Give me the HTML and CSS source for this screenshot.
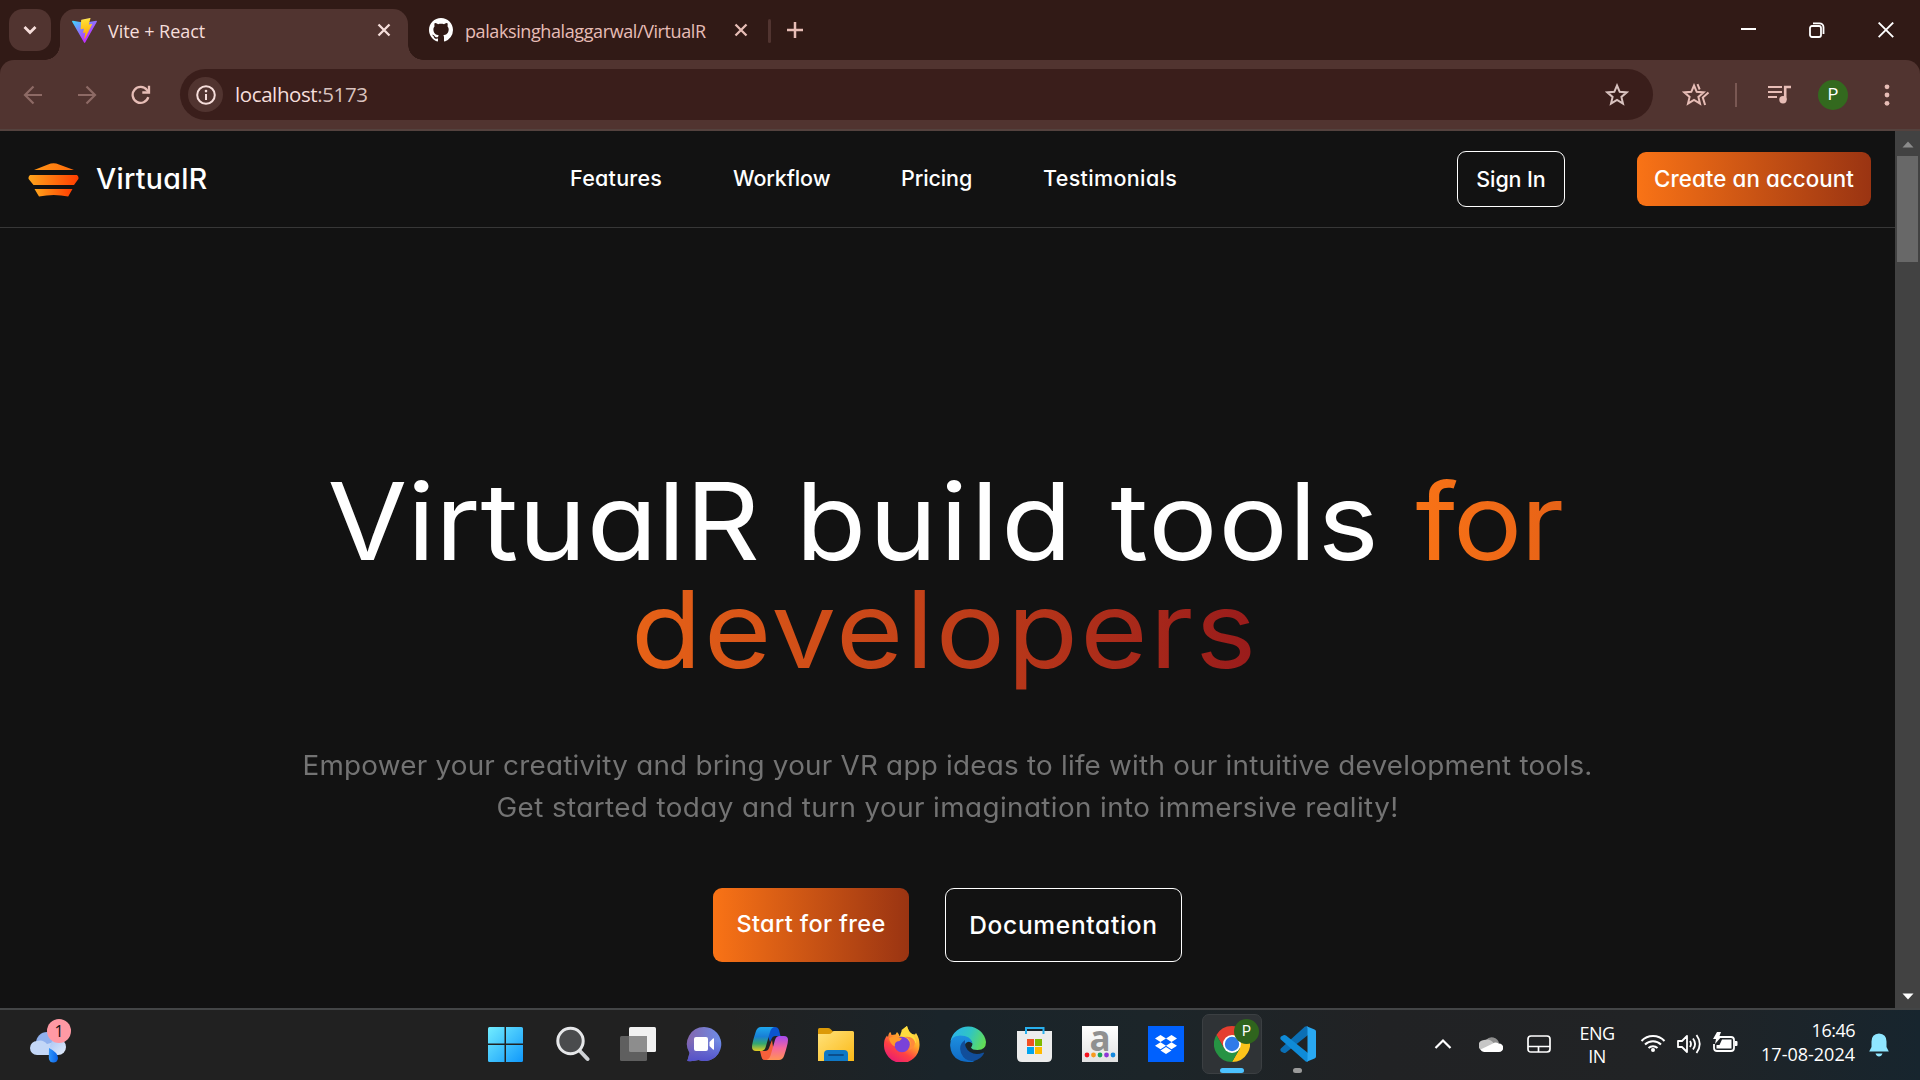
FILE: index.html
```html
<!DOCTYPE html>
<html lang="en">
<head>
<meta charset="utf-8">
<title>Vite + React</title>
<link rel="stylesheet" href="styles.css">
</head>
<body>
<div class="screen">

  <!-- Browser tab strip -->
  <header class="tabstrip">
    <button class="tab-search" aria-label="Search tabs"><svg width="14" height="10" viewBox="0 0 14 10"><path d="M1.5 2l5.500 5.500 5.500-5.500" fill="none" stroke="#f6dedb" stroke-width="2.800"/></svg></button>
    <div class="tab tab-active">
      <svg class="favicon" width="25" height="25" viewBox="0 0 256 257">
        <defs>
          <linearGradient id="va" x1="-.8%" x2="57.600%" y1="7.600%" y2="78.400%"><stop offset="0" stop-color="#41D1FF"/><stop offset="1" stop-color="#BD34FE"/></linearGradient>
          <linearGradient id="vb" x1="43.400%" x2="50.300%" y1="2.200%" y2="89%"><stop offset="0" stop-color="#FFEA83"/><stop offset=".083" stop-color="#FFDD35"/><stop offset="1" stop-color="#FFA800"/></linearGradient>
        </defs>
        <path fill="url(#va)" d="M255.153 37.938L134.897 252.976c-2.483 4.440-8.862 4.466-11.382.048L.875 37.958c-2.746-4.814 1.371-10.646 6.827-9.670l120.385 21.517a6.537 6.537 0 0 0 2.322-.004l117.867-21.483c5.438-.991 9.574 4.796 6.877 9.620Z"/>
        <path fill="url(#vb)" d="M185.432.063L96.440 17.501a3.268 3.268 0 0 0-2.634 3.014l-5.474 92.456a3.268 3.268 0 0 0 3.997 3.378l24.777-5.718c2.318-.535 4.413 1.507 3.936 3.838l-7.361 36.047c-.495 2.426 1.782 4.500 4.151 3.780l15.304-4.649c2.372-.72 4.652 1.360 4.150 3.788l-11.698 56.621c-.732 3.542 3.979 5.473 5.943 2.437l1.313-2.028l72.516-144.720c1.215-2.423-.88-5.186-3.540-4.672l-25.505 4.922c-2.396.462-4.435-1.770-3.759-4.114l16.646-57.705c.677-2.350-1.370-4.583-3.769-4.113Z"/>
      </svg>
      <span class="tab-title">Vite + React</span>
      <svg class="tab-close" width="14" height="14" viewBox="0 0 14 14"><path d="M1.500 1.500l11 11m0-11l-11 11" stroke="#f6dedb" stroke-width="2.300"/></svg>
    </div>
    <div class="tab tab-idle">
      <svg class="favicon" width="24" height="24" viewBox="0 0 16 16"><path fill="#fff" d="M8 0C3.580 0 0 3.580 0 8c0 3.540 2.290 6.530 5.470 7.590.4.070.550-.170.550-.380 0-.190-.010-.820-.010-1.490-2.010.370-2.530-.490-2.690-.940-.090-.230-.480-.940-.820-1.130-.280-.150-.680-.520-.010-.530.630-.010 1.080.580 1.230.820.720 1.210 1.870.870 2.330.660.070-.520.280-.870.510-1.070-1.780-.2-3.640-.890-3.640-3.950 0-.870.310-1.590.820-2.150-.080-.2-.360-1.020.080-2.120 0 0 .670-.210 2.200.820.640-.180 1.320-.270 2-.270s1.360.090 2 .270c1.530-1.040 2.200-.820 2.200-.820.440 1.100.160 1.920.080 2.120.510.560.820 1.270.820 2.150 0 3.070-1.870 3.750-3.650 3.950.290.250.540.730.540 1.480 0 1.070-.010 1.930-.010 2.200 0 .210.150.460.550.380A8.010 8.010 0 0 0 16 8c0-4.420-3.580-8-8-8z"/></svg>
      <span class="tab-title">palaksinghalaggarwal/VirtualR</span>
      <svg class="tab-close" width="14" height="14" viewBox="0 0 14 14"><path d="M1.500 1.500l11 11m0-11l-11 11" stroke="#e7bdb6" stroke-width="2.300"/></svg>
    </div>
    <i class="tab-divider"></i>
    <svg class="tab-new" width="16" height="16" viewBox="0 0 16 16"><path d="M8 0v16M0 8h16" stroke="#e7bdb6" stroke-width="2.500"/></svg>
    <div class="window-controls">
      <svg width="16" height="16" viewBox="0 0 16 16"><path d="M1 7h15" stroke="#fff" stroke-width="2"/></svg>
      <svg width="16" height="16" viewBox="0 0 16 16" fill="none" stroke="#fff" stroke-width="1.800"><rect x="1" y="4" width="11" height="11" rx="2"/><path d="M4 1.300h6.500a4 4 0 0 1 4 4V12"/></svg>
      <svg width="16" height="16" viewBox="0 0 16 16"><path d="M.6.600l14.600 14.600m0-14.600L.6 15.200" stroke="#fff" stroke-width="1.900"/></svg>
    </div>
  </header>

  <!-- Browser toolbar -->
  <div class="toolbar">
    <svg class="tool-back" width="20" height="20" viewBox="0 0 20 20" fill="none" stroke="#8d6a65" stroke-width="2.200"><path d="M19 10H2m8.500-8.500L2 10l8.500 8.500"/></svg>
    <svg class="tool-forward" width="20" height="20" viewBox="0 0 20 20" fill="none" stroke="#8d6a65" stroke-width="2.200"><path d="M1 10h17M9.500 1.500L18 10l-8.500 8.500"/></svg>
    <svg class="tool-reload" width="20" height="20" viewBox="0 0 20 20" fill="none" stroke="#e7bdb6" stroke-width="2.300"><path d="M17.300 12.200A8 8 0 1 1 16 5l1.800 2"/><path d="M18 .8v6.700h-6.700"/></svg>
    <div class="omnibox">
      <span class="site-info"><svg width="20" height="20" viewBox="0 0 20 20"><circle cx="10" cy="10" r="8.800" fill="none" stroke="#f6dedb" stroke-width="2"/><path d="M10 9v6" stroke="#f6dedb" stroke-width="2"/><circle cx="10" cy="6.100" r="1.300" fill="#f6dedb"/></svg></span>
      <span class="url">localhost<span class="port">:5173</span></span>
      <svg class="bookmark" width="24" height="24" viewBox="0 0 24 24"><path d="M12 2.500l2.700 6.300 6.900.6-5.200 4.500 1.600 6.700-6-3.600-6 3.600 1.600-6.700-5.200-4.500 6.900-.6z" fill="none" stroke="#d8c2bf" stroke-width="2"/></svg>
    </div>
    <svg class="tool-star" width="28" height="24" viewBox="0 0 28 24" fill="none" stroke="#e7bdb6" stroke-width="2"><path d="M12 2.500l2.700 6.300 6.900.6-5.200 4.500 1.600 6.700-6-3.600-6 3.600 1.600-6.700-5.200-4.500 6.900-.6z"/><path d="M15.500 1.200l2.200 5.300M26.500 9.600l-5.700 5 2.300 7.400"/></svg>
    <i class="tool-divider"></i>
    <svg class="tool-media" width="24" height="20" viewBox="0 0 24 20"><path d="M0 2h14M0 7h14M0 12h9" stroke="#e7bdb6" stroke-width="2.200"/><path d="M17.200 15V2H23" fill="none" stroke="#e7bdb6" stroke-width="2.600"/><circle cx="15" cy="14.700" r="3.700" fill="#e7bdb6"/></svg>
    <span class="avatar">P</span>
    <svg class="tool-menu" width="6" height="22" viewBox="0 0 6 22" fill="#e7bdb6"><circle cx="3" cy="2.800" r="2.400"/><circle cx="3" cy="11" r="2.400"/><circle cx="3" cy="19.300" r="2.400"/></svg>
  </div>

  <!-- Page -->
  <div class="viewport">
    <main class="page">
      <nav class="navbar">
        <svg class="logo" width="51" height="34" viewBox="0 0 51 34">
          <defs><linearGradient id="lg" x1="0" x2="1"><stop offset="0" stop-color="#ffa51c"/><stop offset="1" stop-color="#ff3d00"/></linearGradient>
          <linearGradient id="lt" x1="0" x2="1"><stop offset="0" stop-color="#ff9417"/><stop offset="1" stop-color="#ff6a0a"/></linearGradient></defs>
          <path d="M6 7L20 1.600Q25.500-1 31 1.600L46 7z" fill="url(#lt)"/>
          <path d="M2 12h47q2.500 2.500 1 4.500L46 22H5.500L1 16.500Q-.5 14.500 2 12z" fill="url(#lg)"/>
          <path d="M6.500 26h38l-4.300 7.500Q26 30.500 11 33.500z" fill="url(#lg)"/>
        </svg>
        <span class="brand">VirtualR</span>
        <ul class="links">
          <li class="w-features">Features</li>
          <li class="w-workflow">Workflow</li>
          <li class="w-pricing">Pricing</li>
          <li class="w-testimonials">Testimonials</li>
        </ul>
        <a class="btn btn-signin">Sign In</a>
        <a class="btn btn-create">Create an account</a>
      </nav>
      <section class="hero">
        <h1><span class="t-name">VirtualR</span> <span class="t-build">build</span> <span class="t-tools">tools</span> <span class="accent"><span class="t-for">for</span><br><span class="t-dev">developers</span></span></h1>
        <p class="lead"><span class="lead-one">Empower your creativity and bring your VR app ideas to life with our intuitive development tools.</span><br><span class="lead-two">Get started today and turn your imagination into immersive reality!</span></p>
        <div class="actions">
          <a class="btn btn-start">Start for free</a>
          <a class="btn btn-docs">Documentation</a>
        </div>
      </section>
    </main>
    <aside class="scrollbar">
      <svg width="12" height="7" viewBox="0 0 12 7"><path d="M.5 6.500L6 .5l5.500 6z" fill="#8b8b8b"/></svg>
      <i class="thumb"></i>
      <svg class="down" width="12" height="7" viewBox="0 0 12 7"><path d="M.5.500L6 6.500l5.500-6z" fill="#fff"/></svg>
    </aside>
  </div>

  <!-- Windows taskbar -->
  <footer class="taskbar">
    <div class="weather">
      <svg width="38" height="34" viewBox="0 0 38 34">
        <defs><linearGradient id="wc" x1="0" y1="0" x2="1" y2="1"><stop offset="0" stop-color="#a9c4f4"/><stop offset="1" stop-color="#e4edfb"/></linearGradient><linearGradient id="wd" x1="0" x2="1"><stop offset="0" stop-color="#2f95fb"/><stop offset="1" stop-color="#0a62e8"/></linearGradient></defs>
        <circle cx="18" cy="14" r="11" fill="#90b1ee"/><path d="M8 26a7 7 0 0 1 0-14q6-2 10 3l11-3v14z" fill="#c3d7f7"/><circle cx="29" cy="18" r="8" fill="url(#wc)"/>
        <path d="M20 19q9 4.500 9 10a4.600 4.600 0 0 1-9.200 0z" fill="url(#wd)"/>
      </svg>
      <span class="badge">1</span>
    </div>

    <div class="apps">
      <span class="app"><svg width="36" height="36" viewBox="0 0 36 36"><defs><linearGradient id="w" x1="0" y1="0" x2="1" y2="1"><stop offset="0" stop-color="#72edff"/><stop offset="1" stop-color="#1098fb"/></linearGradient><mask id="wm"><path fill="#fff" d="M0 1h16.500v16.500H0zM18 1h17v16.500H18zM0 19h16.500v17H0zM18 19h17v17H18z"/></mask></defs><rect y="1" width="35" height="35" rx="1.500" fill="url(#w)" mask="url(#wm)"/></svg></span>
      <span class="app"><svg width="36" height="36" viewBox="0 0 36 36"><path d="M25 24l8.500 9" stroke="#cfd2d6" stroke-width="4" stroke-linecap="round"/><circle cx="16.500" cy="15" r="12.700" fill="#4a4b4d" stroke="#e6e7e9" stroke-width="3"/></svg></span>
      <span class="app"><svg width="36" height="36" viewBox="0 0 36 36"><rect x="9" y="1" width="27" height="25" rx="1.500" fill="#f1f1f1"/><rect y="10" width="27" height="25" rx="1.500" fill="#5f5f5f"/><path d="M9 10h18v16H10.500Q9 26 9 24.500z" fill="#8d8d8d"/></svg></span>
      <span class="app"><svg width="36" height="36" viewBox="0 0 36 36"><defs><linearGradient id="ch" x1="0" y1="0" x2="1" y2="0"><stop offset="0" stop-color="#8466ad"/><stop offset="1" stop-color="#6d8de8"/></linearGradient><linearGradient id="ch2" x1="0" y1="0" x2="0" y2="1"><stop offset=".4" stop-color="#5558d0" stop-opacity="0"/><stop offset="1" stop-color="#5351ca"/></linearGradient></defs><path d="M18 1a17 17 0 1 1-5.500 33Q7 35.500 1.300 35L3.500 27A17 17 0 0 1 18 1z" fill="url(#ch)"/><path d="M18 1a17 17 0 1 1-5.500 33Q7 35.500 1.300 35L3.500 27A17 17 0 0 1 18 1z" fill="url(#ch2)"/><rect x="8" y="11" width="14" height="14" rx="2" fill="#fff"/><path d="M23.500 16l3.500-3.600q1-.6 1 .6v10q0 1.200-1 .6L23.500 20z" fill="#fff"/></svg></span>
      <span class="app"><svg width="36" height="36" viewBox="0 0 36 36"><defs><linearGradient id="co1" x1="0" y1="0" x2="0" y2="1"><stop offset="0" stop-color="#1ea7ee"/><stop offset=".4" stop-color="#187fd5"/><stop offset=".7" stop-color="#35a86e"/><stop offset="1" stop-color="#e4cc20"/></linearGradient><linearGradient id="co2" x1="0" y1="0" x2="0" y2="1"><stop offset="0" stop-color="#a54af0"/><stop offset=".5" stop-color="#f5679d"/><stop offset="1" stop-color="#ff9355"/></linearGradient></defs>
        <path d="M13 1h10q3 0 4 3l1.500 6h-5q-3 0-4 3L18 16z" fill="#0a54d0"/><path d="M23 34H13q-3 0-3.500-3L8 25h5q3 0 4-3l3-8z" fill="#f5603a"/>
        <path d="M9 1h13q-3 1-4 5l-4 14q-1.200 5-5 5H4q-4 0-4-4Q0 17 4 5 5.500 1 9 1z" fill="url(#co1)"/><path d="M27.500 10H32q4 0 4 4 0 4-4 16-1.500 4-5 4H14.500q3-1 4.200-5L23 14q1.200-4 4.500-4z" fill="url(#co2)"/></svg></span>
      <span class="app"><svg width="36" height="36" viewBox="0 0 36 36"><defs><linearGradient id="ex" x1="0" y1="0" x2="1" y2="1"><stop offset="0" stop-color="#ffe27b"/><stop offset="1" stop-color="#fbb917"/></linearGradient></defs><path d="M0 10V3.500Q0 2 1.500 2H10q1.500 0 2.500 1l3 3v4z" fill="#dc9a08"/><path d="M0 8h11q1.500 0 3-1.500L15.500 5H34.500Q36 5 36 6.500V35H0z" fill="url(#ex)"/><path d="M6 35v-7q0-4 4-4h16q4 0 4 4v7z" fill="#0f78c6"/><path d="M11 29h14" stroke="#0b4e8c" stroke-width="1.800" stroke-linecap="round"/></svg></span>
      <span class="app"><svg width="36" height="36" viewBox="0 0 36 36"><defs><linearGradient id="f1" x1=".8" y1="0" x2=".2" y2="1"><stop offset="0" stop-color="#fff14d"/><stop offset=".35" stop-color="#ffab2b"/><stop offset=".65" stop-color="#ff4242"/><stop offset="1" stop-color="#e5167b"/></linearGradient></defs><path d="M6 6q1 0 1.500 3l4-.5L13 6q2 2 2.500 4h3L17.500 4 23 0q1 5 5 8l3 .5L32 7q4 6 3.500 13A17.700 17.700 0 0 1 0 18.500Q0 13 3 9.500 4 11 4 11 4 8 6 6z" fill="url(#f1)"/><path d="M16 10q1-6 7-10 1 5 5 8 4 4 4 9z" fill="#ffdd3e"/><circle cx="18" cy="18.500" r="7.800" fill="#7a42d8"/><path d="M5 12q5-3 9-1l4 1.500q-2 3-5 3-3 2-2 5-5-2-6-8.500z" fill="#ff9a2b"/><path d="M20 11q5 1 6.500 5 1 5-2 8 6-1 6.500-8Q29 10 20 11z" fill="#ff8a3c"/></svg></span>
      <span class="app"><svg width="36" height="36" viewBox="0 0 36 36"><defs><linearGradient id="e1" x1="0" x2="1" y1=".3" y2=".6"><stop offset="0" stop-color="#2bb3ec"/><stop offset=".5" stop-color="#30c5c3"/><stop offset="1" stop-color="#63dd54"/></linearGradient><linearGradient id="e2" x1="0" x2="0" y1="0" y2="1"><stop offset="0" stop-color="#1d90e0"/><stop offset="1" stop-color="#0f69c4"/></linearGradient></defs><path d="M.5 15A18 18 0 0 1 36 16q0 8-8.500 8Q22 24 21 21.500q2.500-3 .5-6Q17 9 .5 15z" fill="url(#e1)"/><path d="M.2 20Q-.5 10 10 9.500q11 0 12.500 8-4-3.500-7 0-6 12 9 18.500Q21 36 18 36 1.500 35 .2 20z" fill="url(#e2)"/><path d="M15 14q-7 5-4 13 4 9 13 8 7-2 10-7.500 0-1.200-1.200-.8Q26 29.500 20 26q-6-4-5-12z" fill="#114e9a"/></svg></span>
      <span class="app"><svg width="36" height="36" viewBox="0 0 36 36"><path d="M1 5h35v26q0 5-5 5H6q-5 0-5-5z" fill="#ececec"/><path d="M10 8V2h17.500v6" fill="none" stroke="#28b0ee" stroke-width="2"/><path fill="#f25022" d="M11 13h7v7h-7z"/><path fill="#7fba00" d="M19 13h7v7h-7z"/><path fill="#00a4ef" d="M11 21h7v7h-7z"/><path fill="#ffb900" d="M19 21h7v7h-7z"/></svg></span>
      <span class="app"><span class="alexa"><b>a</b><svg width="32" height="6" viewBox="0 0 32 6"><circle cx="3" cy="3" r="2.400" fill="#f5121d"/><circle cx="9.500" cy="3" r="2.400" fill="#f79a1e"/><circle cx="16" cy="3" r="2.400" fill="#19a45b"/><circle cx="22.500" cy="3" r="2.400" fill="#8d35d6"/><circle cx="29" cy="3" r="2.400" fill="#1489df"/></svg></span></span>
      <span class="app"><svg width="36" height="36" viewBox="0 0 36 36"><path fill="#0061fe" d="M0 0h36v36H0z"/><path fill="#fff" d="M12.500 9l5.500 3.500-5.500 3.500L7 12.500zM23.500 9l5.500 3.500-5.500 3.500-5.500-3.500zM12.500 16.200l5.500 3.500-5.500 3.500L7 19.700zM23.500 16.200l5.500 3.500-5.500 3.500-5.500-3.500zM18 21l5.500 3.500L18 28l-5.500-3.500z"/></svg></span>
      <span class="app app-current"><svg width="36" height="36" viewBox="0 0 48 48"><path d="M3.215 12A24 24 0 0 1 44.785 12H24L13.600 30z" fill="#e43e2f"/><path d="M44.785 12A24 24 0 0 1 24 48L34.400 30 24 12z" fill="#fcc31a"/><path d="M24 48A24 24 0 0 1 3.215 12L13.600 30H34.400z" fill="#269343"/><circle cx="24" cy="24" r="12" fill="#fff"/><circle cx="24" cy="24" r="9.600" fill="#2f7be9"/></svg><span class="profile">P</span></span>
      <span class="app app-open"><svg width="36" height="36" viewBox="0 0 36 36"><path d="M1 25.500l3 1.500q1 .2 2-.6L28 9V.5L25 .4.8 22.500q-1 1.500.2 3z" fill="#0b6fb5"/><path d="M1 10.500l3-1.500q1-.2 2 .6L28 27v8.500l-2 .2L.8 13.500q-1-1.500.2-3z" fill="#0f8bd8"/><path d="M26 0l8.500 3.500Q36 4.200 36 5.500v25q0 1.300-1.500 2L26 36q1.500-.5 1.500-2.500v-31Q27.500.5 26 0z" fill="#29a8f2"/></svg></span>
    </div>

    <div class="tray">
      <svg class="tray-chevron" width="18" height="12" viewBox="0 0 18 12"><path d="M1.500 10L9 2.500l7.500 7.500" fill="none" stroke="#fff" stroke-width="2.200"/></svg>
      <svg class="tray-cloud" width="24" height="18" viewBox="0 0 24 18"><path d="M7 5a7.500 7.500 0 0 1 13 3l-8 4z" fill="#8e8e8e"/><path d="M5 16a5.500 5.500 0 0 1 0-11q6-2 10 3.500l5 7.500z" fill="#c6c6c6"/><path d="M1.500 14.500L14 8.500q2-2 6 0a4.200 4.200 0 0 1 0 8.500H5q-2.500-.5-3.500-2.500z" fill="#fff"/></svg>
      <svg class="tray-pad" width="24" height="20" viewBox="0 0 24 20"><path d="M4 2h16q3 0 3 3v10q0 3-3 3H4q-3 0-3-3V5q0-3 3-3zM1 12.500h22M11.500 12.500V18" fill="none" stroke="#fff" stroke-width="1.700"/></svg>
      <span class="lang">ENG<br>IN</span>
      <svg class="tray-wifi" width="26" height="20" viewBox="0 0 26 20" fill="none" stroke="#fff" stroke-width="2"><path d="M1.500 8a16 16 0 0 1 23 0M5 11.500a11.200 11.200 0 0 1 16 0M8.500 15a6.400 6.400 0 0 1 9 0"/><circle cx="13" cy="17" r="2" fill="#fff" stroke="none"/></svg>
      <svg class="tray-sound" width="26" height="22" viewBox="0 0 26 22" fill="none" stroke="#fff" stroke-width="1.800"><path d="M2 8h4l5-5v16l-5-5H2zM14 8q2 3 0 6M17 5.500q4.200 5.500 0 11M20.500 2q6.500 9 0 18" stroke-linejoin="round"/></svg>
      <svg class="tray-battery" width="26" height="22" viewBox="0 0 26 22"><path d="M8 5h11q3 0 3 3v8q0 3-3 3H5q-3 0-3-3v-4" fill="none" stroke="#fff" stroke-width="1.800"/><path d="M10 7.500h9.500v9H4.500V13h3z" fill="#fff"/><path d="M23 9h1.500q1 0 1 1v3q0 1-1 1H23zM5 0h4L7.500 4H10L3 12l1-5H1z" fill="#fff"/></svg>
      <span class="clock"><span class="time">16:46</span><br>17-08-2024</span>
      <svg class="tray-bell" width="20" height="24" viewBox="0 0 20 24" fill="#8fe6ff"><path d="M10 .5q7.500.5 7.500 8V14l2.300 4.500H.2L2.500 14V8.500Q2.500 1 10 .5zM6.500 20.500h7q-1 3-3.500 3t-3.500-3z"/></svg>
    </div>
  </footer>
</div>
</body>
</html>
```
FILE: styles.css
```css
* { box-sizing: border-box; }
body { margin: 0; background: #121212; }
svg { display: block; flex: none; }
.screen {
  display: flex; flex-direction: column; width: 1920px; height: 1080px; overflow: hidden;
  font-family: "Open Sans", "Noto Sans", sans-serif; font-size: 18px; color: #fff;
}

/* tab strip */
.tabstrip { display: flex; height: 60px; flex: none; background: #311a16; }
.tab-search {
  display: flex; align-items: center; justify-content: center; width: 42px; height: 42px;
  margin: 9px 9px 0 9px; padding: 0; border: 0; border-radius: 14px; background: #513430;
}
.tab { display: flex; align-items: center; height: 51px; margin-top: 9px; padding-bottom: 9px; position: relative; }
.tab-active { width: 348px; padding-left: 12px; border-radius: 15px 15px 0 0; background: #513430; }
.tab-active::before, .tab-active::after {
  content: ""; position: absolute; bottom: 0; width: 15px; height: 15px;
}
.tab-active::before { left: -15px; background: radial-gradient(circle at 0 0, transparent 14.5px, #513430 15px); }
.tab-active::after { right: -15px; background: radial-gradient(circle at 100% 0, transparent 14.5px, #513430 15px); }
.tab-idle { width: 360px; padding-left: 21px; color: #e7bdb6; }
.tab-title { height: 24px; line-height: 24px; margin-top: 2px; white-space: nowrap; }
.tab-active .tab-title { width: 269px; margin-left: 11px; letter-spacing: -.05px; color: #f6dedb; }
.tab-idle .tab-title { width: 269px; margin-left: 12px; letter-spacing: -.4px; }
.tab-divider { width: 3px; height: 24px; margin: 19px 0 0 0; border-radius: 2px; background: #513430; }
.tab-new { margin: 22px 0 0 16px; }
.window-controls { display: flex; gap: 53px; margin: 22px 26px 0 auto; }

/* toolbar */
.toolbar {
  display: flex; align-items: center; height: 71px; flex: none;
  background: #513430; border-bottom: 2px solid #54423e; border-radius: 14px 14px 0 0;
  box-shadow: 0 -14px 0 0 #311a16;
  clip-path: inset(0);
}
.tool-back { margin-left: 23px; }
.tool-forward { margin-left: 34px; }
.tool-reload { margin-left: 34px; }
.omnibox {
  display: flex; align-items: center; width: 1473px; height: 51px; margin-left: 29px; padding: 0 24px 0 8px;
  border-radius: 26px; background: #3a1e1b;
}
.site-info {
  display: flex; align-items: center; justify-content: center; width: 35px; height: 35px;
  border-radius: 50%; background: #513430;
}
.url { margin: -1px 0 0 12px; font-size: 20.500px; letter-spacing: -.4px; color: #f6dedb; }
.port { color: #d8c2bf; }
.bookmark { margin-left: auto; }
.tool-star { margin-left: 29px; }
.tool-divider { width: 2px; height: 24px; margin-left: 25px; background: #7a5853; }
.tool-media { margin-left: 31px; }
.avatar {
  width: 30px; height: 30px; margin-left: 26px; border-radius: 50%; background: #33691e;
  font: 16.500px/30px Roboto, sans-serif; text-align: center;
}
.tool-menu { margin-left: 36px; }

/* page */
.viewport { display: flex; height: 877px; flex: none; }
.page { width: 1895px; background: #121212; font-family: Inter, sans-serif; font-feature-settings: "cv11"; }
.navbar {
  display: flex; align-items: center; height: 97px; padding-left: 28px;
  border-bottom: 1px solid #373737; font-size: 21.500px; font-weight: 450;
}
.brand { width: 474px; margin-left: 17px; padding-bottom: 2px; font-size: 28.500px; letter-spacing: .3px; }
.logo { margin-top: 2px; }
.links { display: flex; gap: 72px; width: 887px; margin: 0; padding: 0 0 2px; list-style: none; white-space: nowrap; }
.w-features { width: 91px; letter-spacing: .25px; }
.w-workflow { width: 96px; letter-spacing: -.1px; }
.w-pricing { width: 70px; letter-spacing: -.1px; }
.w-testimonials { letter-spacing: .35px; }
.btn {
  display: flex; align-items: center; justify-content: center; border-radius: 9px; white-space: nowrap;
}
.btn-signin { width: 108px; height: 56px; padding-bottom: 1px; border: 1px solid #fff; letter-spacing: -.1px; }
.btn-create {
  width: 234px; height: 54px; margin-left: 72px; padding-bottom: 1px; font-size: 22.300px; letter-spacing: .1px;
  background: linear-gradient(to right, #f97316, #9a3412);
}

/* the headline and lead are set slightly extended */
.hero { padding-top: 239px; text-align: center; }
h1 {
  margin: 0; padding-right: 5px; font-size: 107px; line-height: 108px; font-weight: 400; word-spacing: 3px;
  white-space: nowrap; transform: scaleX(1.08);
}
.t-build { letter-spacing: 2.500px; }
.t-tools { letter-spacing: .9px; }
.t-for { letter-spacing: -1.700px; }
.t-dev { letter-spacing: 2px; }
.accent { background: linear-gradient(to right, #f97316, #991b1b); -webkit-background-clip: text; background-clip: text; color: transparent; }
.lead { margin: 61px 0 0; font-size: 26.500px; line-height: 42px; color: #737373; white-space: nowrap; transform: scaleX(1.05); }
.lead-one { letter-spacing: .220px; }
.lead-two { letter-spacing: .380px; }
.actions { display: flex; justify-content: center; gap: 36px; margin-top: 60px; font-size: 23.500px; font-weight: 450; }
.btn-start { width: 196px; height: 74px; padding-bottom: 3px; letter-spacing: .35px; background: linear-gradient(to right, #f97316, #9a3412); }
.btn-docs { width: 237px; height: 74px; padding-bottom: 1px; border: 1px solid #fff; font-size: 24.500px; letter-spacing: .7px; }

.scrollbar { display: flex; flex-direction: column; align-items: center; width: 25px; padding: 10px 0 8px; background: #424242; }
.thumb { width: 21px; height: 106px; margin-top: 8px; background: #686868; }
.scrollbar .down { margin-top: auto; }

/* taskbar */
.taskbar {
  display: flex; height: 72px; flex: none; border-top: 2px solid #434546;
  background: linear-gradient(to right, #212121 0, #212121 38%, #1a242a 49%, #1c2529 60%, #212224 72%, #212325 86%, #17252e 100%);
}
.weather { position: relative; width: 458px; padding: 19px 0 0 29px; }
.badge {
  position: absolute; left: 47px; top: 9px; width: 24px; height: 24px; border-radius: 50%;
  background: #ff99a4; color: #111; font-size: 16px; line-height: 24px; text-align: center;
}
.apps { display: flex; gap: 6px; margin-left: 18px; }
.app { position: relative; display: flex; align-items: center; justify-content: center; width: 60px; height: 60px; margin-top: 4px; border-radius: 7px; }
.app-current { background: #2f3336; border: 1px solid #3b3f42; }
.app-current::after, .app-open::after { content: ""; position: absolute; bottom: 1px; height: 5px; border-radius: 3px; }
.app-current::after { width: 24px; left: 17px; bottom: 0; background: #4cc2ff; }
.app-open::after { width: 9px; left: 25px; background: #9a9a9a; }
.profile {
  position: absolute; left: 31px; top: 4px; width: 25px; height: 25px; border-radius: 50%; background: #2f641d;
  font: 14px/25px Roboto, sans-serif; text-align: center;
}
.alexa { display: flex; flex-direction: column; align-items: center; width: 36px; height: 36px; background: linear-gradient(#fff, #e2e2e2); }
.alexa b { height: 26px; font-size: 35px; line-height: 23px; color: #909090; }

.tray { display: flex; align-items: flex-start; }
.tray-chevron { margin: 28px 0 0 106px; }
.tray-cloud { margin: 25px 0 0 27px; }
.tray-pad { margin: 24px 0 0 24px; }
.lang { width: 44px; margin: 12px 0 0 24px; line-height: 23px; text-align: center; letter-spacing: -.6px; }
.tray-wifi { margin: 23px 0 0 21px; }
.tray-sound { margin: 23px 0 0 10px; }
.tray-battery { margin: 22px 0 0 10px; }
.clock { width: 100px; margin: 8px 0 0 17px; line-height: 24px; text-align: right; }
.time { letter-spacing: -.5px; }
.tray-bell { margin: 23px 0 0 14px; }
```
